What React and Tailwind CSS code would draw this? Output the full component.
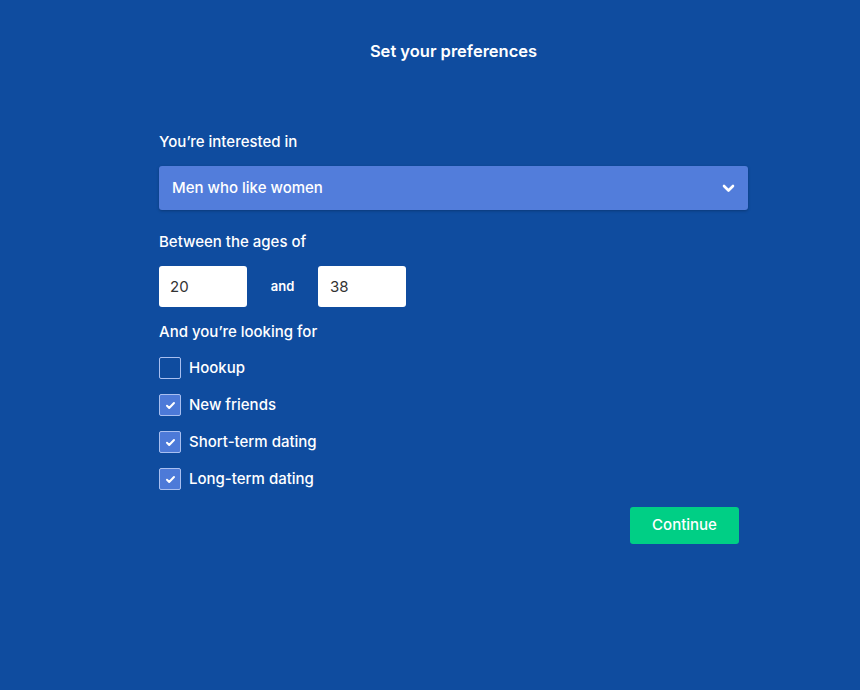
import { useState } from "react";

const options = [
  { id: "hookup", label: "Hookup" },
  { id: "friends", label: "New friends" },
  { id: "short", label: "Short-term dating" },
  { id: "long", label: "Long-term dating" },
];

export default function App() {
  const [checked, setChecked] = useState({
    hookup: false,
    friends: true,
    short: true,
    long: true,
  });
  const [minAge, setMinAge] = useState("20");
  const [maxAge, setMaxAge] = useState("38");

  const toggle = (id) => setChecked({ ...checked, [id]: !checked[id] });

  return (
    <main
      className="min-h-[690px] w-full bg-[#0f4c9f] text-white"
      style={{ fontFamily: "Inter, 'Open Sans', sans-serif" }}
    >
      <div className="ml-[159px] w-[589px] pt-[40px]">
        <h1 className="text-center text-[16.5px] font-semibold leading-[22px]">Set your preferences</h1>

        <p className="mt-[69px] text-[15px] font-medium leading-[22px]">You’re interested in</p>
        <div className="mt-[13px] flex h-[44px] items-center justify-between rounded-[3px] bg-[#527ddb] pl-[13px] pr-[13px] shadow-[0_1px_3px_rgba(0,0,0,0.25)]">
          <span className="text-[15px] font-medium">Men who like women</span>
          <svg width="13" height="9" viewBox="0 0 13 9" fill="none">
            <path d="M2 2l4.5 4.5L11 2" stroke="white" strokeWidth="2.6" strokeLinecap="round" strokeLinejoin="round" />
          </svg>
        </div>

        <p className="mt-[21px] text-[15px] font-medium leading-[22px]">Between the ages of</p>
        <div className="mt-[13px] flex items-center">
          <input
            value={minAge}
            onChange={(e) => setMinAge(e.target.value)}
            className="h-[41px] w-[88px] rounded-[3px] bg-white px-[11px] text-[15px] text-[#333] outline-none"
          />
          <span className="w-[71px] text-center text-[13px] font-semibold">and</span>
          <input
            value={maxAge}
            onChange={(e) => setMaxAge(e.target.value)}
            className="h-[41px] w-[88px] rounded-[3px] bg-white px-[12px] text-[15px] text-[#333] outline-none"
          />
        </div>

        <p className="mt-[14px] text-[15px] font-medium leading-[22px]">And you’re looking for</p>
        <div className="mt-[14px] flex flex-col gap-[15px]">
          {options.map((o) => (
            <label key={o.id} className="flex h-[22px] cursor-pointer items-center gap-[8px]" onClick={() => toggle(o.id)}>
              <span
                className={
                  checked[o.id]
                    ? "flex h-[22px] w-[22px] items-center justify-center rounded-[2px] border border-[#a9bff0] bg-[#4d7ad8]"
                    : "flex h-[22px] w-[22px] items-center justify-center rounded-[2px] border border-[#a9bff0] bg-transparent"
                }
              >
                {checked[o.id] && (
                  <svg width="11" height="9" viewBox="0 0 11 9" fill="none">
                    <path d="M2 4.8l2.2 2.2L9 2" stroke="white" strokeWidth="2" strokeLinecap="round" strokeLinejoin="round" />
                  </svg>
                )}
              </span>
              <span className="text-[15px] font-medium leading-[22px]">{o.label}</span>
            </label>
          ))}
        </div>

        <div className="mt-[17px] flex justify-end pr-[9px]">
          <button className="h-[37px] w-[109px] rounded-[3px] bg-[#00cf85] text-[15px] font-medium text-white">
            Continue
          </button>
        </div>
      </div>
    </main>
  );
}
